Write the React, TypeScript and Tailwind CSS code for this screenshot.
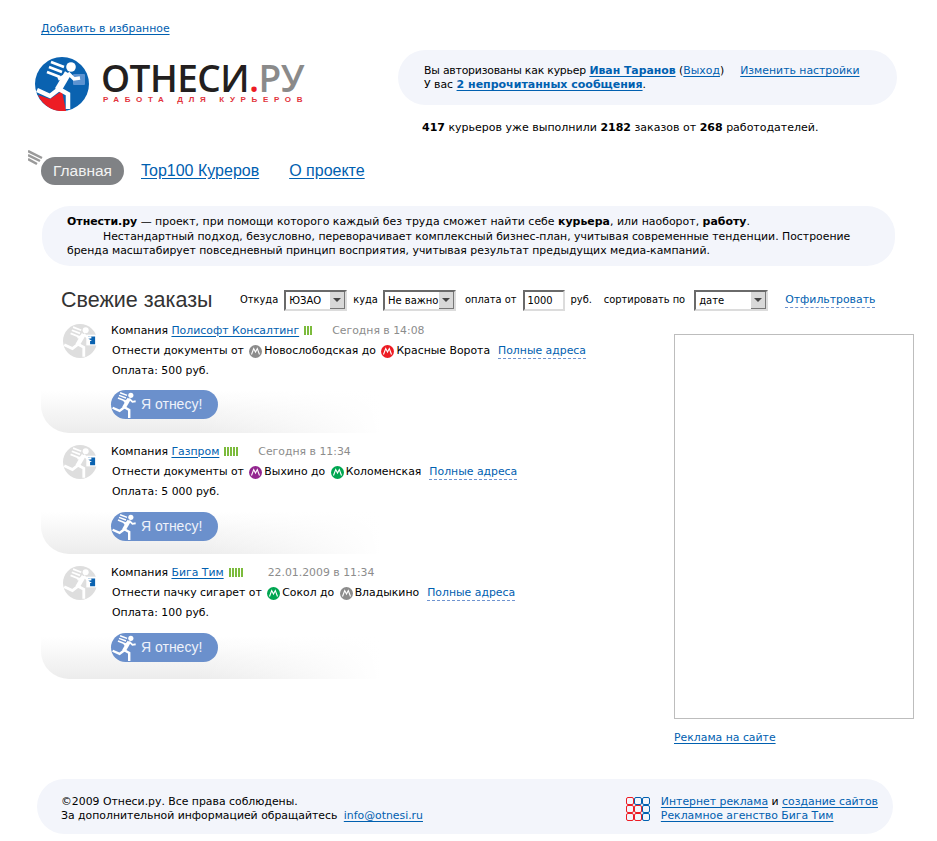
import React from 'react';

const linkCls = 'text-[#0060b0] underline underline-offset-2';
const dashedCls = 'text-[#0060b0] border-b border-dashed border-[#6f94d0]';

interface Order {
  company: string;
  rating: number;
  date: string;
  dateGap: string;
  task: string;
  from: string;
  fromColor: string;
  to: string;
  toColor: string;
  pay: string;
  buttonGap: string;
  height: string;
}

const orders: Order[] = [
  {
    company: 'Полисофт Консалтинг',
    rating: 3,
    date: 'Сегодня в 14:08',
    dateGap: 'ml-[20px]',
    task: 'Отнести документы от',
    from: 'Новослободская',
    fromColor: '#8c8c8c',
    to: 'Красные Ворота',
    toColor: '#ed1c24',
    pay: '500 руб.',
    buttonGap: 'mt-[8px]',
    height: 'h-[121px]',
  },
  {
    company: 'Газпром',
    rating: 5,
    date: 'Сегодня в 11:34',
    dateGap: 'ml-[20px]',
    task: 'Отнести документы от',
    from: 'Выхино',
    fromColor: '#93278f',
    to: 'Коломенская',
    toColor: '#00a651',
    pay: '5 000 руб.',
    buttonGap: 'mt-[9px]',
    height: 'h-[121px]',
  },
  {
    company: 'Бига Тим',
    rating: 5,
    date: '22.01.2009 в 11:34',
    dateGap: 'ml-[25px]',
    task: 'Отнести пачку сигарет от',
    from: 'Сокол',
    fromColor: '#00a651',
    to: 'Владыкино',
    toColor: '#8c8c8c',
    pay: '100 руб.',
    buttonGap: 'mt-[9px]',
    height: 'h-[125px]',
  },
];

// Running courier, used in the logo and on the buttons
const Runner = ({ color = '#fff' }: { color?: string }) => (
  <g fill={color} stroke={color}>
    <circle cx="36" cy="10" r="4.8" stroke="none" />
    <path d="M33 16 L23 33" fill="none" strokeWidth="7" />
    <path d="M24 32 L15 39 L2 33" fill="none" strokeWidth="4.5" strokeLinejoin="miter" />
    <path d="M24 32 L33 37 L33 52" fill="none" strokeWidth="4.5" strokeLinejoin="miter" />
    <path d="M33 16 L39 22 L45 21" fill="none" strokeWidth="3.5" />
    <path d="M30 19 L23 22" fill="none" strokeWidth="3.5" />
    <path d="M16 5 L29 10 M14 10 L27 15 M12 15 L25 20" fill="none" strokeWidth="2.8" />
  </g>
);

const Logo = () => (
  <div className="flex items-start">
    <svg width="54" height="54" viewBox="0 0 54 54" className="shrink-0">
      <circle cx="27" cy="27" r="27" fill="#0a62b0" />
      <path d="M3 38 L15 42 L27 34 L31 54 A27 27 0 0 1 3 38 Z" fill="#ed1c24" />
      <rect x="38" y="17" width="12" height="11" rx="1" fill="#5c93d1" />
      <Runner />
    </svg>
    <div className="ml-[14px] mt-[4px]">
      <div className="-ml-[2px] font-['Open_Sans',sans-serif] font-semibold text-[37px] leading-[34px] tracking-[-0.55px] text-[#231f20] whitespace-nowrap">
        ОТНЕСИ<span className="text-[#ed1c24]">.</span>
        <span className="text-[#8a8a8a]">РУ</span>
      </div>
      <div className="font-['Liberation_Sans',sans-serif] text-[8px] leading-[10px] font-bold tracking-[5.65px] text-[#e2343c] whitespace-nowrap">
        РАБОТА ДЛЯ КУРЬЕРОВ
      </div>
    </div>
  </div>
);

const Metro = ({ color }: { color: string }) => (
  <svg width="13" height="13" viewBox="0 0 13 13" className="shrink-0 mx-[2px]">
    <circle cx="6.5" cy="6.5" r="6.5" fill={color} />
    <path d="M2.5 9.5 L4.7 3.5 L6.5 7 L8.3 3.5 L10.5 9.5" fill="none" stroke="#fff" strokeWidth="1.1" />
  </svg>
);

const Rating = ({ n }: { n: number }) => (
  <span className="inline-flex gap-[1px] ml-[5px] h-[9px]">
    {Array.from({ length: n }).map((_, i) => (
      <span key={i} className="w-[2px] h-[9px] bg-[#7cbb3c]" />
    ))}
  </span>
);

const Select = ({ value, width }: { value: string; width: string }) => (
  <span className={`inline-flex h-[21px] items-stretch border-2 border-t-[#6a6a6a] border-l-[#6a6a6a] border-b-[#dcdcdc] border-r-[#dcdcdc] bg-white ${width}`}>
    <span className="flex-1 pl-[3px] text-[10px] leading-[17px] text-black whitespace-nowrap overflow-hidden">{value}</span>
    <span className="w-[15px] flex items-center justify-center bg-[#d8d8d8] border-r border-b border-[#777]">
      <span className="border-x-[4px] border-x-transparent border-t-[4px] border-t-[#444]" />
    </span>
  </span>
);

const OrderCard = ({ o }: { o: Order }) => (
  <div className={`relative ${o.height}`}>
    <div className="absolute left-0 bottom-[8px] h-[42px] w-[340px] rounded-bl-[28px] bg-[linear-gradient(to_right,transparent_45%,white_100%),linear-gradient(to_bottom,white,#ececec)]" />
    <div className="relative flex">
      <svg width="34" height="34" viewBox="0 0 54 54" className="ml-[22px] mt-[4px] shrink-0">
        <circle cx="27" cy="27" r="27" fill="#dedede" />
        <rect x="37" y="17" width="17" height="17" fill="#fff" />
        <path d="M40 20 H51 V32 H43 V27 H46 L40 23 Z" fill="#0a62b0" />
        <Runner />
      </svg>
      <div className="ml-[15px] whitespace-nowrap">
        <div className="h-[21px] leading-[20px] flex items-center -ml-[1px]">
          Компания&nbsp;<a className={linkCls}>{o.company}</a>
          <Rating n={o.rating} />
          <span className={`${o.dateGap} text-[#8c8c8c]`}>{o.date}</span>
        </div>
        <div className="h-[20px] flex items-center">
          {o.task}&nbsp;
          <Metro color={o.fromColor} />
          {o.from} до&nbsp;
          <Metro color={o.toColor} />
          {o.to}
          <a className={`${dashedCls} ml-[8px] leading-[14px]`}>Полные адреса</a>
        </div>
        <div className="h-[21px] leading-[20px]">Оплата: {o.pay}</div>
        <div className={`${o.buttonGap} -ml-[1px] w-[107px] h-[29px] rounded-[15px] bg-[#6b90cc] flex items-center font-['Liberation_Sans',sans-serif] text-[14px] overflow-hidden`}>
          <svg width="30" height="29" viewBox="0 0 54 54" className="shrink-0">
            <Runner />
          </svg>
          <span className="text-[#eef2fa]">Я отнесу!</span>
        </div>
      </div>
    </div>
  </div>
);

const Footer = () => (
  <div className="mt-[34px] ml-[37px] w-[856px] h-[55px] rounded-[28px] bg-[#f3f5fb] flex items-center justify-between pl-[24px] pr-[15px] pt-[5px] leading-[14px]">
    <div>
      <div>©2009 Отнеси.ру. Все права соблюдены.</div>
      <div>
        За дополнительной информацией обращайтесь <a className={`${linkCls} ml-[3px]`}>info@otnesi.ru</a>
      </div>
    </div>
    <div className="flex items-center">
      <div className="grid grid-cols-3 mr-[11px]">
        {['r', 'b', 'b', 'r', 'r', 'b', 'r', 'r', 'b'].map((c, i) => (
          <span key={i} className={`w-[8px] h-[8px] border rounded-[2px] ${c === 'r' ? 'border-[#ed1c24]' : 'border-[#0060b0]'}`} />
        ))}
      </div>
      <div>
        <div>
          <a className={linkCls}>Интернет реклама</a> и <a className={linkCls}>создание сайтов</a>
        </div>
        <div>
          <a className={linkCls}>Рекламное агенство Бига Тим</a>
        </div>
      </div>
    </div>
  </div>
);

export default function App() {
  return (
    <div className="w-[937px] h-[841px] overflow-hidden bg-white font-['DejaVu_Sans',sans-serif] text-[10.86px] text-black">
      <div className="pl-[41px] pt-[21px] h-[50px] leading-[16px]">
        <a className={linkCls}>Добавить в избранное</a>
      </div>

      {/* Header */}
      <div className="flex h-[91px] pl-[35px]">
        <div className="w-[363px] pt-[7px]">
          <Logo />
        </div>
        <div>
          <div className="w-[499px] h-[55px] rounded-[28px] bg-[#f3f5fb] pl-[26px] pt-[14px] leading-[14px]">
            <div>
              <span className="tracking-[-0.2px]">Вы авторизованы как курьер</span> <a className={`${linkCls} font-bold`}>Иван Таранов</a> (<a className={linkCls}>Выход</a>)
              <a className={`${linkCls} ml-[16px]`}>Изменить настройки</a>
            </div>
            <div>
              У вас <a className={`${linkCls} font-bold text-[11px]`}>2 непрочитанных сообщения</a>.
            </div>
          </div>
          <div className="mt-[15px] ml-[24px] leading-[16px] text-[11px]">
            <b>417</b> курьеров уже выполнили <b>2182</b> заказов от <b>268</b> работодателей.
          </div>
        </div>
      </div>

      {/* Nav */}
      <div className="relative mt-[16px] ml-[41px] flex items-center h-[28px] font-['Liberation_Sans',sans-serif] text-[16px]">
        <svg width="18" height="18" viewBox="0 0 18 18" className="absolute -left-[13px] -top-[7px]">
          <path d="M0 1 L14 8 M0 5 L12 11 M0 9 L9 14" stroke="#9a9a9a" strokeWidth="2.5" />
        </svg>
        <span className="w-[83px] h-[28px] rounded-[14px] bg-[#808285] text-[#f2f2f2] text-[15.5px] flex items-center justify-center">Главная</span>
        <a className={`${linkCls} ml-[17px]`}>Top100 Куреров</a>
        <a className={`${linkCls} ml-[30px]`}>О проекте</a>
      </div>

      {/* Intro */}
      <div className="mt-[21px] ml-[42px] w-[853px] h-[60px] rounded-[28px] bg-[#f3f5fb] pl-[25px] pr-[30px] pt-[9px] leading-[14.5px]">
        <div className="text-[10.95px]">
          <b>Отнести.ру</b> — проект, при помощи которого каждый без труда сможет найти себе <b>курьера</b>, или наоборот, <b>работу</b>.
        </div>
        <div className="indent-[36px]">
          Нестандартный подход, безусловно, переворачивает комплексный бизнес-план, учитывая современные тенденции. Построение бренда масштабирует повседневный принцип восприятия, учитывая результат предыдущих медиа-кампаний.
        </div>
      </div>

      {/* Filter */}
      <div className="mt-[19px] ml-[61px] h-[30px] flex items-center whitespace-nowrap text-[9.9px]">
        <span className="font-['Liberation_Sans',sans-serif] text-[21.5px] text-[#333] w-[179px]">Свежие заказы</span>
        <span>Откуда</span>
        <span className="ml-[6px]"><Select value="ЮЗАО" width="w-[63px]" /></span>
        <span className="ml-[6px]">куда</span>
        <span className="ml-[5px]"><Select value="Не важно" width="w-[73px]" /></span>
        <span className="ml-[9px]">оплата от</span>
        <span className="ml-[6px] h-[21px] w-[42px] border-2 border-t-[#6a6a6a] border-l-[#6a6a6a] border-b-[#dcdcdc] border-r-[#dcdcdc] pl-[3px] leading-[17px]">1000</span>
        <span className="ml-[6px]">руб.</span>
        <span className="ml-[12px]">сортировать по</span>
        <span className="ml-[9px]"><Select value="дате" width="w-[74px]" /></span>
        <a className={`${dashedCls} ml-[17px] text-[10.86px] leading-[14px]`}>Отфильтровать</a>
      </div>

      {/* Orders + ad */}
      <div className="flex mt-[5px]">
        <div className="ml-[41px] w-[633px]">
          {orders.map(o => (
            <OrderCard key={o.company} o={o} />
          ))}
        </div>
        <div>
          <div className="w-[240px] h-[385px] mt-[14px] border border-[#bdbdbd]" />
          <a className={`${linkCls} block mt-[12px] leading-[14px]`}>Реклама на сайте</a>
        </div>
      </div>

      <Footer />
    </div>
  );
}
